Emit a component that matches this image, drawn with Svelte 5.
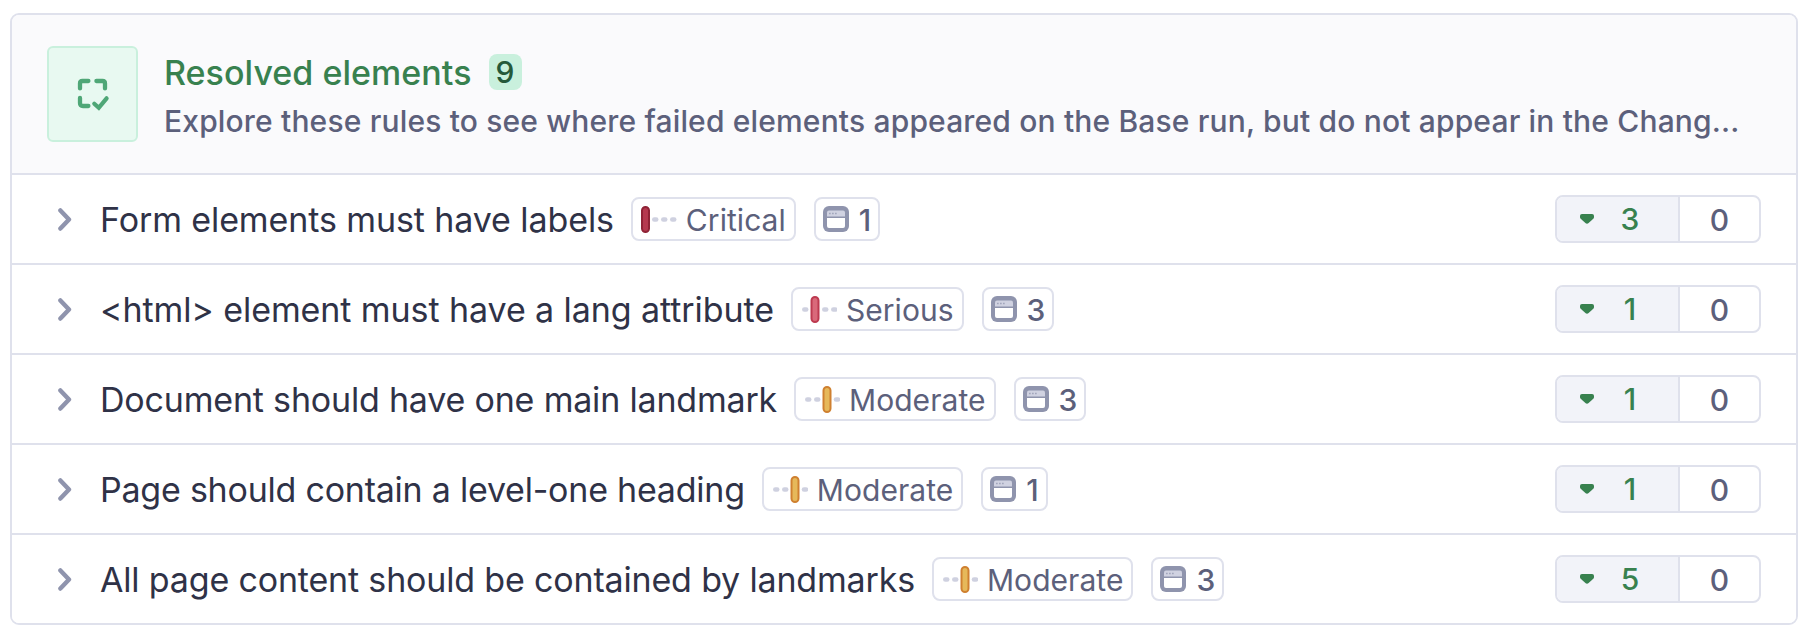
<script>
  // tracking: letter spacing of the rule name, in px
  const rules = [
    { title: 'Form elements must have labels', tracking: -0.1, impact: 'Critical', pages: 1, resolved: 3, added: 0 },
    { title: '<html> element must have a lang attribute', tracking: -0.08, impact: 'Serious', pages: 3, resolved: 1, added: 0 },
    { title: 'Document should have one main landmark', tracking: -0.19, impact: 'Moderate', pages: 3, resolved: 1, added: 0 },
    { title: 'Page should contain a level-one heading', tracking: -0.23, impact: 'Moderate', pages: 1, resolved: 1, added: 0 },
    { title: 'All page content should be contained by landmarks', tracking: -0.17, impact: 'Moderate', pages: 3, resolved: 5, added: 0 }
  ];

  // bar: left edge of the marker; dots: left edges of the empty steps
  const scales = {
    Critical: { bar: 0, dots: [11, 20, 29], fill: '#b5394f', stroke: '#8f2336' },
    Serious: { bar: 9.5, dots: [1, 21, 30], fill: '#d9697a', stroke: '#bd3a50' },
    Moderate: { bar: 18.5, dots: [1, 10, 29.7], fill: '#e6b85a', stroke: '#cf8030' }
  };
</script>

<section class="card">
  <header>
    <div class="badge-icon">
      <svg width="34" height="34" viewBox="0 0 34 34" fill="none" stroke="#4fa777" stroke-width="4.300" stroke-linecap="round" stroke-linejoin="round">
        <path d="M3 11.400V6.500Q3 4 5.500 4H11.400M19.400 4H25.500Q28 4 28 6.500V11.400M3 21V26Q3 29 6 29H11.400" />
        <path d="M17.300 26.700L21.800 30.800L29.600 21.300" stroke-width="4.200" stroke-linejoin="miter" />
      </svg>
    </div>
    <div class="heading">
      <div class="title-line">
        <h2>Resolved elements</h2>
        <span class="count">9</span>
      </div>
      <p>Explore these rules to see where failed elements appeared on the Base run, but do not appear in the Chang...</p>
    </div>
  </header>

  {#each rules as rule}
    {@const s = scales[rule.impact]}
    <div class="row">
      <svg class="chevron" width="14" height="24" viewBox="0 0 14 24" fill="none" stroke="#8f94ad" stroke-width="4.400" stroke-linecap="round" stroke-linejoin="round">
        <path d="M2.400 3.400L11 12.500L2.400 21.600" />
      </svg>
      <span class="name" style="letter-spacing: {rule.tracking}px">{rule.title}</span>
      <span class="chip impact">
        <svg width="36" height="28" viewBox="0 0 36 28">
          {#each s.dots as x}
            <rect {x} y="12.200" width="6.500" height="4.600" rx="2.300" fill="#cfd1e0" />
          {/each}
          <rect x={s.bar + 1} y="2" width="7" height="25" rx="3.500" fill={s.fill} stroke={s.stroke} stroke-width="2" />
        </svg>
        <span class="label">{rule.impact}</span>
      </span>
      <span class="chip pages">
        <svg width="26" height="26" viewBox="0 0 26 26">
          <rect width="26" height="26" rx="6" fill="#8f94ad" />
          <path d="M4 10.500V6.500Q4 4.500 6 4.500H20Q22 4.500 22 6.500V10.500Z" fill="#d0d2e1" />
          <path d="M4 12H22V20Q22 22 20 22H6Q4 22 4 20Z" fill="#fff" />
          <path d="M6.300 7.500h1.200M9.300 7.500h1.200M12.300 7.500h1.200" stroke="#8f94ad" stroke-width="1.400" />
        </svg>
        <span class="num">{rule.pages}</span>
      </span>
      <div class="delta">
        <span class="down">
          <svg width="14" height="10" viewBox="0 0 14 10"><path d="M2 0H12Q14 0 14 2V3.200Q14 4 13.300 4.700L8.600 9.100Q7 10.500 5.400 9.100L.7 4.700Q0 4 0 3.200V2Q0 0 2 0Z" fill="#38814f" /></svg>
          <span>{rule.resolved}</span>
        </span>
        <span class="up">{rule.added}</span>
      </div>
    </div>
  {/each}
</section>

<style>
  :global(body) {
    background: #fff;
    font-family: Inter, 'Liberation Sans', sans-serif;
  }
  .card {
    box-sizing: border-box;
    width: 1788px;
    margin: 13px 0 0 10px;
    border: 2px solid #dfe1ec;
    border-radius: 9px;
    overflow: hidden;
    color: #2f3247;
  }
  header {
    display: flex;
    align-items: center;
    box-sizing: border-box;
    height: 158px;
    padding: 0 35px;
    background: #fafafc;
  }
  .badge-icon {
    box-sizing: border-box;
    flex: none;
    width: 91px;
    height: 96px;
    padding: 29px 0 0 28px;
    border: 2px solid #c9f0dd;
    border-radius: 6px;
    background: #e8f9f1;
  }
  .heading {
    margin-left: 26px;
    padding-top: 4px;
    white-space: nowrap;
  }
  .title-line {
    display: flex;
    align-items: center;
    height: 44px;
  }
  h2 {
    margin: 0;
    font-size: 34px;
    font-weight: 500;
    letter-spacing: 0.04px;
    line-height: 44px;
    color: #38814f;
  }
  .count {
    width: 33px;
    height: 36px;
    margin: -2px 0 0 17px;
    border-radius: 8px;
    background: #c9f0dd;
    color: #25593a;
    font-size: 30px;
    font-weight: 500;
    line-height: 36px;
    text-align: center;
  }
  p {
    margin: 6px 0 0;
    font-size: 30px;
    font-weight: 500;
    letter-spacing: 0.165px;
    line-height: 40px;
    color: #5c607b;
  }
  .row {
    display: flex;
    align-items: center;
    box-sizing: border-box;
    height: 90px;
    padding: 0 35px 0 46px;
    border-top: 2px solid #dfe1ec;
    background: #fff;
  }
  .chevron {
    flex: none;
    margin-right: 28px;
  }
  .name {
    padding-top: 2px;
    font-size: 34px;
    line-height: 44px;
    white-space: nowrap;
  }
  .chip {
    display: flex;
    align-items: center;
    box-sizing: border-box;
    height: 44px;
    margin-left: 17px;
    padding: 0 8px;
    border: 2px solid #dfe1ec;
    border-radius: 8px;
    color: #5c607b;
    font-size: 30px;
    line-height: 40px;
  }
  .chip svg {
    flex: none;
  }
  .label {
    margin-left: 9px;
    padding-top: 2px;
    letter-spacing: 0.05px;
  }
  .pages {
    margin-left: 18px;
    padding: 0 7px;
  }
  .num {
    margin-left: 10px;
    padding-top: 2px;
    font-weight: 500;
  }
  .delta {
    display: flex;
    box-sizing: border-box;
    width: 206px;
    height: 48px;
    margin-left: auto;
    border: 2px solid #dfe1ec;
    border-radius: 8px;
    overflow: hidden;
    font-size: 30px;
    font-weight: 500;
    line-height: 44px;
  }
  .down {
    display: flex;
    align-items: center;
    box-sizing: border-box;
    width: 123px;
    border-right: 2px solid #dfe1ec;
    background: #f2f3f9;
    color: #38814f;
  }
  .down svg {
    margin-left: 23px;
  }
  .down span {
    width: 36px;
    margin-left: 18px;
    text-align: center;
  }
  .up {
    flex: 1;
    padding-top: 1px;
    color: #5c607b;
    text-align: center;
  }
</style>
